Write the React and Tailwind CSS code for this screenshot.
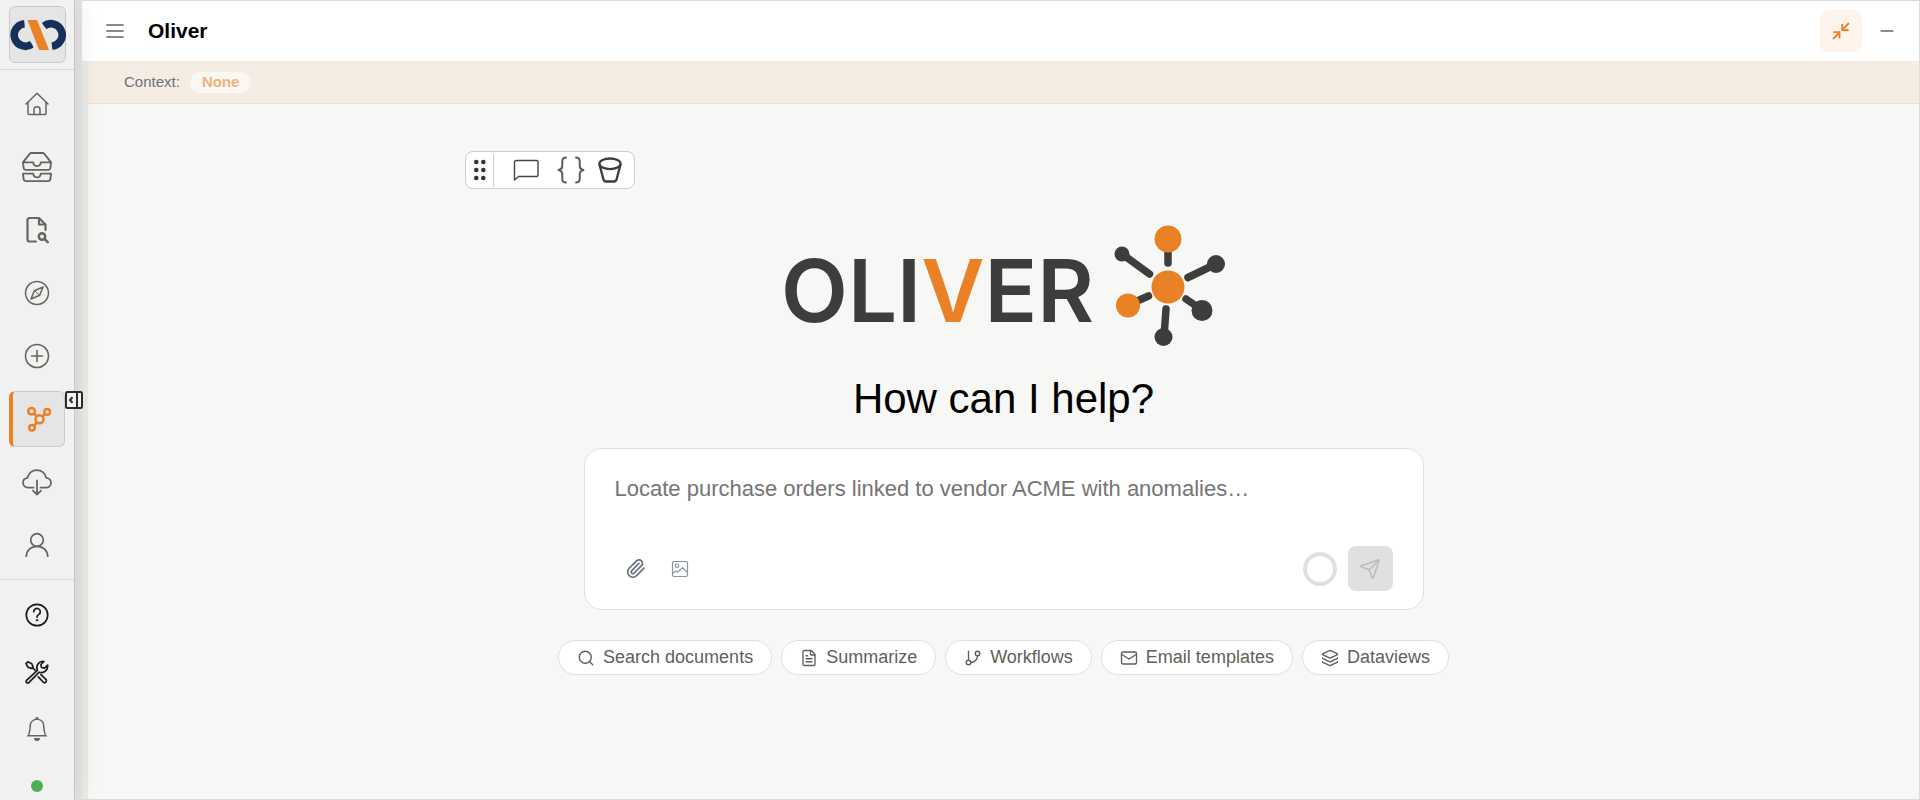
import React, { useState } from 'react'
import { FileText, GitBranch, Layers, Mail, Minus, Paperclip, Search, Send } from 'lucide-react'
import { BsBell, BsInboxes } from 'react-icons/bs'

function HomeIcon() {
  return (
    <svg width="24" height="24" viewBox="0 0 24 24" fill="none" stroke="currentColor" strokeWidth="1.500" strokeLinecap="round" strokeLinejoin="round">
      <path d="M1 12 12 1.2 23 12" />
      <path d="M3 10.2V21.5c0 .6.4 1 1 1h16c.6 0 1-.4 1-1V10.2" />
      <path d="M9 22.5v-5.2c0-1.7 1.2-2.5 3-2.5s3 .8 3 2.5v5.2" />
    </svg>
  )
}

function FileSearchIcon() {
  return (
    <svg width="24" height="28" viewBox="0 0 24 28" fill="none" stroke="currentColor" strokeWidth="2.200" strokeLinecap="round" strokeLinejoin="round">
      <path d="M11 25.500H4.500a2 2 0 0 1-2-2V4a2 2 0 0 1 2-2h9.500l6.500 6.500V14" />
      <path d="M14 2.500V8.500H20" />
      <circle cx="17" cy="20.500" r="3.200" strokeWidth="2.500" />
      <path d="M19.700 23.200 22.700 26.200" strokeWidth="2.500" />
    </svg>
  )
}

function CompassIcon() {
  return (
    <svg width="26" height="26" viewBox="0 0 26 26" fill="none" stroke="currentColor" strokeWidth="1.500" strokeLinejoin="round">
      <circle cx="13" cy="13" r="11.500" />
      <path d="M19 7 15.700 15.200 7 19l3.300-8.200z" />
      <path d="M10.300 10.800 15.700 15.200" strokeWidth="1" />
    </svg>
  )
}

function PlusCircleIcon() {
  return (
    <svg width="26" height="26" viewBox="0 0 26 26" fill="none" stroke="currentColor" strokeWidth="1.600" strokeLinecap="round">
      <circle cx="13" cy="13" r="11.500" />
      <path d="M13 7.500v11M7.500 13h11" />
    </svg>
  )
}

function NodesIcon() {
  return (
    <svg width="26" height="26" viewBox="0 0 26 26" fill="none" stroke="currentColor" strokeWidth="2.500">
      <circle cx="13.500" cy="13.200" r="4" />
      <circle cx="5.500" cy="5.200" r="3.300" />
      <circle cx="21.200" cy="5.900" r="2.800" />
      <circle cx="6" cy="21.800" r="2.800" />
      <path d="m8 7.700 2.700 2.700M19 7.900l-2.700 2.600M8.200 19.700l2.500-3.500" />
    </svg>
  )
}

function CloudDownIcon() {
  return (
    <svg width="30" height="27" viewBox="0 0 30 27" fill="none" stroke="currentColor" strokeWidth="1.800" strokeLinecap="round" strokeLinejoin="round">
      <path d="M11.500 18.700H6.500C3.500 18.700 1 16.600 1 13.800c0-2.600 1.900-4.500 4.500-4.900C6 4.500 10 1.200 14.800 1.200c4.900 0 8.800 3.200 9.400 7.600 2.700.2 4.800 2.200 4.800 4.900 0 2.800-2.300 5-5.200 5h-5.300" />
      <path d="M15 11.500v14M11 21.700l4 4 4-4" />
    </svg>
  )
}

function PersonIcon() {
  return (
    <svg width="24" height="26" viewBox="0 0 24 26" fill="none" stroke="currentColor" strokeWidth="1.700">
      <circle cx="12" cy="8" r="6.300" />
      <path d="M1.200 25C1.200 18.500 6 14.300 12 14.300S22.800 18.500 22.800 25" />
    </svg>
  )
}

function HelpIcon() {
  return (
    <svg width="24" height="24" viewBox="0 0 24 24" fill="none" stroke="currentColor" strokeWidth="1.700" strokeLinecap="round">
      <circle cx="12" cy="12" r="10.700" />
      <path d="M8.700 8.800a3.300 3.300 0 1 1 5.200 2.600c-1.200.8-1.900 1.500-1.900 2.700" />
      <circle cx="12" cy="17.300" r=".8" fill="currentColor" strokeWidth=".8" />
    </svg>
  )
}

function ToolsIcon() {
  return (
    <svg width="24" height="24" viewBox="0 0 24 24" fill="none" stroke="currentColor" strokeWidth="1.700" strokeLinecap="round" strokeLinejoin="round">
      <path d="m1 3.600 1.800-1.800 4 1.900 1.300 3.300-1.300 1.300L3.200 7.500z" />
      <path d="m7.500 7.700 2.500 2.500" />
      <path d="m12.300 10.400-10.700 10a1.500 1.500 0 0 0 2.200 2.200l10.400-10.400c3.300 1.200 8.700-.8 8.500-7l-3.200 2.900-3-.6-.6-3 3-3c-5-.7-8.200 3.500-6.600 8.900z" />
      <path d="m13.300 16.800 4.800 5.200a1.900 1.900 0 0 0 2.800-2.600l-5-4.800" />
    </svg>
  )
}

function BrandIcon() {
  return (
    <svg className="shrink-0" width="56" height="32" viewBox="0 0 56 32">
      <path d="M14.500 4.700A11.300 11.300 0 1 0 22 25.200" fill="none" stroke="#16305a" strokeWidth="7.600" />
      <path d="M34 7A11.300 11.300 0 1 1 42 27.200" fill="none" stroke="#16305a" strokeWidth="7.600" />
      <path d="M14 0h16.500l12.500 32H24.500z" fill="#e5e5e5" />
      <path d="M17.500 1h9.500l12 30H29z" fill="#ea8125" />
    </svg>
  )
}

function CollapseIcon() {
  return (
    <svg width="18" height="18" viewBox="0 0 18 18" fill="#f1f1f1" stroke="#2b2b2b" strokeWidth="2" strokeLinejoin="round">
      <rect x="1" y="1" width="16" height="16" rx="1.500" />
      <path d="M12 1v16M7.500 6.300 5 9l2.500 2.700" />
    </svg>
  )
}

function MenuIcon() {
  return (
    <svg width="18" height="14" viewBox="0 0 18 14" fill="none" stroke="currentColor" strokeWidth="1.700" strokeLinecap="round">
      <path d="M1 1h16M1 7h16M1 13h16" />
    </svg>
  )
}

function ShrinkIcon() {
  return (
    <svg width="18" height="18" viewBox="0 0 18 18" fill="none" stroke="currentColor" strokeWidth="1.800">
      <path d="M17 1l-6.500 6.500M10.200 2v6h6.300M1 17l6.500-6.500M1.500 10.200h6v6.300" />
    </svg>
  )
}

function ChatIcon() {
  return (
    <svg width="26" height="22" viewBox="0 0 26 22" fill="none" stroke="#444" strokeWidth="1.400" strokeLinejoin="round">
      <path d="M3 1.500h20.500c.8 0 1.500.7 1.500 1.500v13c0 .8-.7 1.500-1.500 1.500H5.500L1.500 21V3c0-.8.7-1.500 1.500-1.500z" />
    </svg>
  )
}

function BracesIcon() {
  return (
    <svg width="28" height="28" viewBox="0 0 28 28" fill="none" stroke="#5c5c5c" strokeWidth="2" strokeLinecap="round" strokeLinejoin="round">
      <path d="M9 1.500C6.500 1.500 5.300 2.500 5.300 5v4.500c0 2.500-1 4-3.800 4.500 2.800.5 3.800 2 3.800 4.500V23c0 2.500 1.200 3.500 3.700 3.500" />
      <path d="M19 1.500c2.500 0 3.700 1 3.700 3.500v4.500c0 2.500 1 4 3.800 4.500-2.800.5-3.800 2-3.800 4.500V23c0 2.500-1.200 3.500-3.700 3.500" />
    </svg>
  )
}

function BucketIcon() {
  return (
    <svg width="24" height="26" viewBox="0 0 24 26" fill="none" stroke="#3a3a3a" strokeWidth="2.300" strokeLinejoin="round">
      <ellipse cx="12" cy="6.800" rx="10.600" ry="5.300" />
      <path d="M1.500 7.500 5.300 22c.4 1.600 1.200 2.500 2.800 2.500h7.800c1.600 0 2.400-.9 2.800-2.500L22.500 7.500" />
    </svg>
  )
}

function PictureIcon() {
  return (
    <svg width="18" height="18" viewBox="0 0 18 18" fill="none" stroke="currentColor" strokeWidth="1.200" strokeLinejoin="round">
      <rect x="1.500" y="1.500" width="15" height="15" rx="1.500" />
      <circle cx="6" cy="5.700" r="1.700" />
      <path d="m1.500 13.500 3-2.500 2 1.200 5-4.500 5 4.500" />
    </svg>
  )
}

function OliverMark() {
  return (
    <svg width="112" height="122" viewBox="0 0 112 122">
      <g stroke="#3d3d3d" strokeWidth="7.500" strokeLinecap="round">
        <path d="M54 20v18M8 29l27.500 20M102 39 74 52.500M72 74l16 11M52 84l-2 28M34.500 71 14 80" />
      </g>
      <g fill="#3d3d3d">
        <circle cx="8" cy="29" r="7.500" />
        <circle cx="102" cy="39" r="9" />
        <circle cx="88" cy="85.500" r="10.500" />
        <circle cx="49.500" cy="112" r="9" />
      </g>
      <g fill="#ea8125">
        <circle cx="54" cy="14" r="13.500" />
        <circle cx="54" cy="62" r="16.500" />
        <circle cx="14" cy="80.500" r="12" />
      </g>
    </svg>
  )
}

const navItems = [
  { label: 'Home', icon: <HomeIcon /> },
  { label: 'Inboxes', icon: <BsInboxes size={30} /> },
  { label: 'Search files', icon: <FileSearchIcon /> },
  { label: 'Explore', icon: <CompassIcon /> },
  { label: 'Create', icon: <PlusCircleIcon /> },
  { label: 'Oliver', icon: <NodesIcon />, active: true },
  { label: 'Downloads', icon: <CloudDownIcon /> },
  { label: 'Profile', icon: <PersonIcon /> },
]

const suggestions = [
  { label: 'Search documents', Icon: Search },
  { label: 'Summarize', Icon: FileText },
  { label: 'Workflows', Icon: GitBranch },
  { label: 'Email templates', Icon: Mail },
  { label: 'Dataviews', Icon: Layers },
]

function Sidebar() {
  return (
    <aside className="relative z-10 w-[75px] shrink-0 border-r border-[#c8c8c8] bg-[#f1f1f1] text-[#66665f] shadow-[0_0_24px_rgba(0,0,0,0.12)]">
      <div className="flex h-full flex-col overflow-hidden">
        {/* Brand */}
        <div className="flex h-[70px] shrink-0 items-start border-b border-[#d8d8d8] pt-[6px] pl-[9px]">
          <button type="button" aria-label="Main menu" className="flex h-[57px] w-[57px] items-center justify-center rounded-md border border-[#c9c9c9] bg-[#e5e5e5]">
            <BrandIcon />
          </button>
        </div>

        {/* Main links */}
        <nav className="flex flex-col gap-[7px] border-b border-[#d8d8d8] px-[9px] py-[6px]">
          {navItems.map((item) => (
            <a
              key={item.label}
              href="#"
              aria-label={item.label}
              className={`flex h-[56px] w-[56px] items-center justify-center rounded-md ${
                item.active ? 'border border-l-4 border-[#cacaca] border-l-[#ea8125] bg-[#e5e5e5] text-[#ea8125]' : ''
              }`}
            >
              {item.icon}
            </a>
          ))}
        </nav>

        {/* Bottom actions */}
        <div className="flex flex-col px-[9px] pt-[6px]">
          <button type="button" aria-label="Help" className="flex h-[57px] w-[56px] items-center justify-center text-[#1c1c1c]">
            <HelpIcon />
          </button>
          <button type="button" aria-label="Tools" className="flex h-[57px] w-[56px] items-center justify-center text-[#1c1c1c]">
            <ToolsIcon />
          </button>
          <button type="button" aria-label="Notifications" className="flex h-[57px] w-[56px] items-center justify-center">
            <BsBell size={24} />
          </button>
          <div className="flex h-[57px] w-[56px] items-center justify-center">
            <span className="h-3 w-3 rounded-full bg-[#4caf50]" />
          </div>
        </div>
      </div>

      <button type="button" aria-label="Collapse sidebar" className="absolute top-[391px] left-[65px]">
        <CollapseIcon />
      </button>
    </aside>
  )
}

function App() {
  const [message, setMessage] = useState("")

  return (
    <div className="flex h-screen overflow-hidden bg-[#e6e6e6] font-['Liberation_Sans',Arial,sans-serif]">
      <Sidebar />

      <main className="ml-[7px] flex min-w-0 flex-1 flex-col border-y border-r border-[#dcdcdc] bg-[#ebebe8]">
        {/* Header */}
        <header className="flex h-[60px] shrink-0 items-center bg-white pr-[22px] pl-[24px]">
          <button type="button" aria-label="Menu" className="text-[#66665f]">
            <MenuIcon />
          </button>
          <h1 className="ml-[24px] text-[21px] font-bold text-black">Oliver</h1>
          <button type="button" aria-label="Exit full view" className="ml-auto flex h-[42px] w-[42px] items-center justify-center rounded-lg bg-[#fff4ec] text-[#ea8125]">
            <ShrinkIcon />
          </button>
          <button type="button" aria-label="Minimize" className="ml-[15px] text-[#66665f]">
            <Minus size={20} strokeWidth={2} />
          </button>
        </header>

        <div className="ml-[6px] flex flex-1 flex-col bg-[#f7f7f5]">
          {/* Context bar */}
          <div className="flex h-[43px] shrink-0 items-center gap-[10px] border-b border-[#f0dfd0] bg-[#f5ece3] pl-[36px] text-[15px]">
            <span className="text-[#6b7280]">Context:</span>
            <span className="flex h-[21px] items-center rounded-full bg-[#faf6f1] px-3 font-bold text-[#f0b27c]">None</span>
          </div>

          {/* Floating tools */}
          <div className="mx-auto w-full max-w-[1078px] pt-[47px]">
            <div className="flex h-[38px] w-[170px] items-center rounded-lg border border-[#cccccc] bg-white">
              <svg className="ml-[8px]" width="12" height="22" viewBox="0 0 12 22" fill="#333">
                <circle cx="2.300" cy="3" r="2.300" />
                <circle cx="9.300" cy="3" r="2.300" />
                <circle cx="2.300" cy="11" r="2.300" />
                <circle cx="9.300" cy="11" r="2.300" />
                <circle cx="2.300" cy="19" r="2.300" />
                <circle cx="9.300" cy="19" r="2.300" />
              </svg>
              <span className="ml-[7px] h-[33px] w-px bg-[#cccccc]" />
              <button type="button" aria-label="Comment" className="ml-[19px]">
                <ChatIcon />
              </button>
              <button type="button" aria-label="Code" className="ml-[18px]">
                <BracesIcon />
              </button>
              <button type="button" aria-label="Clear" className="ml-[13px]">
                <BucketIcon />
              </button>
            </div>
          </div>

          {/* Logo */}
          <div className="mt-[36px] flex items-center justify-center gap-[20px]">
            <div className="pt-[10px] font-['Inter',sans-serif] text-[87px] leading-[112px] font-semibold text-[#3d3d3d]">
              OLI<span className="text-[#ea8125]">V</span>ER
            </div>
            <OliverMark />
          </div>

          <h2 className="mt-[27px] text-center text-[42px] leading-[50px] text-black">How can I help?</h2>

          {/* Prompt box */}
          <form
            onSubmit={(e) => e.preventDefault()}
            className="mx-auto mt-[24px] flex h-[162px] w-full max-w-[840px] flex-col rounded-[18px] border border-[#e0e0e0] bg-white px-[30px] pt-[24px] pb-[18px]"
          >
            <textarea
              aria-label="Message"
              value={message}
              onChange={(e) => setMessage(e.target.value)}
              placeholder="Locate purchase orders linked to vendor ACME with anomalies…"
              className="min-h-0 w-full flex-1 resize-none text-[22px] leading-[32px] outline-none placeholder:text-[#757575]"
            />
            <div className="flex items-center">
              <button type="button" aria-label="Attach file" className="ml-[10px] text-[#6b7280]">
                <Paperclip size={21} strokeWidth={2} />
              </button>
              <button type="button" aria-label="Add image" className="ml-[25px] text-[#8d939c]">
                <PictureIcon />
              </button>
              <span className="ml-auto h-[34px] w-[34px] rounded-full border-4 border-[#e0e0e0]" />
              <button type="submit" aria-label="Send" className="ml-[11px] flex h-[45px] w-[45px] items-center justify-center rounded-lg bg-[#e0e0e0] text-[#bdbdbd]">
                <Send size={22} strokeWidth={1.8} />
              </button>
            </div>
          </form>

          {/* Suggestions */}
          <div className="mt-[30px] flex flex-wrap justify-center gap-[9px]">
            {suggestions.map(({ label, Icon }) => (
              <button
                key={label}
                type="button"
                className="flex h-[35px] items-center gap-[8px] rounded-full border border-[#e0e0e0] bg-white px-[18px] text-[18px] text-[#5f5f5a]"
              >
                <Icon size={18} strokeWidth={1.8} />
                {label}
              </button>
            ))}
          </div>
        </div>
      </main>
    </div>
  )
}

export default App
